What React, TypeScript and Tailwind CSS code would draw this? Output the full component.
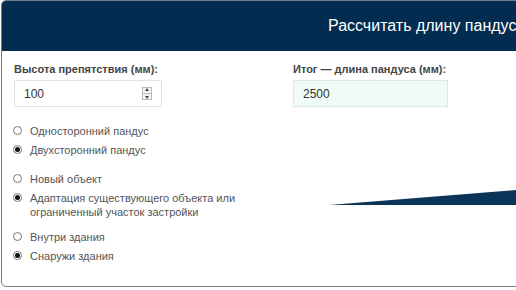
import React from "react";

type Opt = { label: string; checked?: boolean };

const groups: { gap: string; items: Opt[] }[] = [
    { gap: "mt-0", items: [{ label: "Односторонний пандус" }, { label: "Двухсторонний пандус", checked: true }] },
    {
        gap: "mt-[15px]",
        items: [{ label: "Новый объект" }, { label: "Адаптация существующего объекта или ограниченный участок застройки", checked: true }],
    },
    { gap: "mt-[11px]", items: [{ label: "Внутри здания" }, { label: "Снаружи здания", checked: true }] },
];

function Radio({ label, checked }: Opt) {
    return (
        <div className="flex items-start gap-[8px]">
            <span className="-ml-px mt-[2px] flex h-[9px] w-[9px] shrink-0 items-center justify-center rounded-full border border-[#777] bg-white">
                {checked && <span className="h-[5px] w-[5px] rounded-full bg-[#111]" />}
            </span>
            <span className="text-[11px] leading-[14px] text-[#555]">{label}</span>
        </div>
    );
}

function Spinner() {
    return (
        <div className="flex h-[13px] w-[10px] flex-col items-center justify-center gap-[2px] border border-[#bbb] bg-[#f3f3f3]">
            <span className="h-0 w-0 border-x-[2.5px] border-b-[3px] border-x-transparent border-b-[#444]" />
            <span className="h-px w-[8px] bg-[#bbb]" />
            <span className="h-0 w-0 border-x-[2.5px] border-t-[3px] border-x-transparent border-t-[#444]" />
        </div>
    );
}

export default function App() {
    return (
        <div className="h-[290px] w-[516px] overflow-hidden bg-white font-['Liberation_Sans',Arial,sans-serif]">
            <div className="ml-px h-[287px] w-[700px] overflow-hidden rounded-[5px] border border-[#6f7c88]">
                <div className="flex h-[50px] items-center whitespace-nowrap bg-[#022d50] pl-[326px] text-[16px] text-white">
                    Рассчитать длину пандуса
                </div>
                <div className="flex pl-[12px] pt-[11px]">
                    <div className="w-[279px] pr-[30px]">
                        <div className="text-[11px] font-bold leading-[14px] text-[#444]">Высота препятствия (мм):</div>
                        <div className="mt-[4px] flex h-[27px] w-[148px] items-center justify-between border border-[#e2e2e2] pl-[9px] pr-[9px] text-[12px] text-[#333]">
                            <span>100</span>
                            <Spinner />
                        </div>
                        <div className="mt-[17px] flex flex-col">
                            {groups.map((g, i) => (
                                <div key={i} className={`flex flex-col gap-[5px] ${g.gap}`}>
                                    {g.items.map((o) => (
                                        <Radio key={o.label} {...o} />
                                    ))}
                                </div>
                            ))}
                        </div>
                    </div>
                    <div className="flex-1">
                        <div className="text-[11px] font-bold leading-[14px] text-[#444]">Итог — длина пандуса (мм):</div>
                        <div className="mt-[4px] flex h-[27px] w-[155px] items-center border border-[#e0e6e3] bg-[#effcf6] pl-[9px] text-[12px] text-[#333]">
                            2500
                        </div>
                        <svg className="ml-[36px] mt-[74px]" width="300" height="24" viewBox="0 0 300 24">
                            <polygon points="0,24 300,0 300,24" fill="#0a3558" />
                        </svg>
                    </div>
                </div>
            </div>
        </div>
    );
}
